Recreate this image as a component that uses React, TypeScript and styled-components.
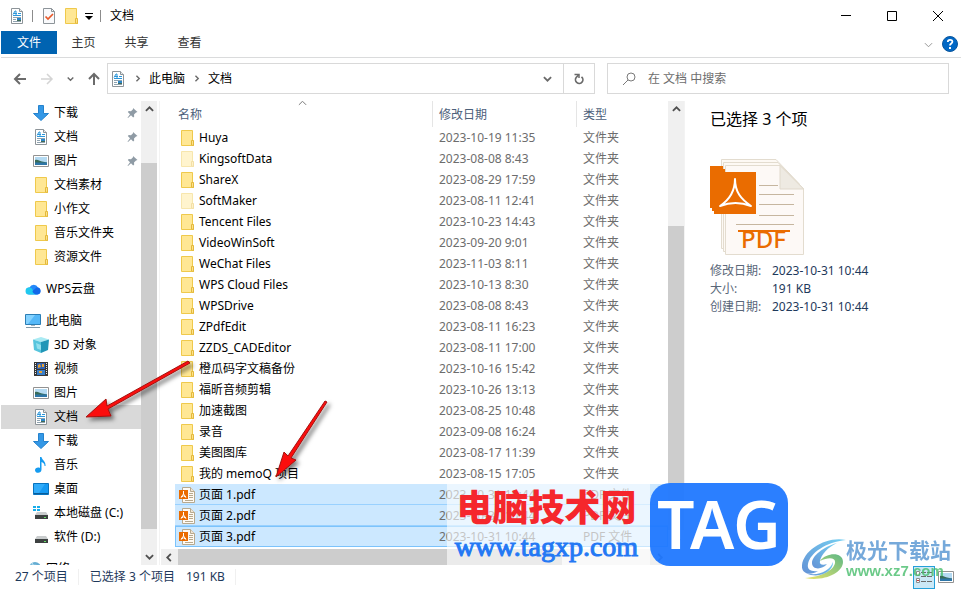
import React from "react";
import styled, { createGlobalStyle } from "styled-components";

const GlobalStyle = createGlobalStyle`
  *, *::before, *::after { box-sizing: border-box; }
  body {
    margin: 0;
    background: #fff;
    color: #000;
    font: 12px/16px "Noto Sans", "Noto Sans CJK SC", sans-serif;
  }
  button, input {
    font: inherit;
    color: inherit;
    margin: 0;
    padding: 0;
    border: 0;
    background: none;
  }
  a { color: inherit; text-decoration: none; }
  svg { display: block; flex: none; }
`;

/* ---------- layout ---------- */

const Window = styled.div`
  position: relative;
  display: flex;
  flex-direction: column;
  height: 100vh;
  padding: 0 1px;
  overflow: hidden;
  background: #fff;
`;

const TitleBar = styled.header`
  display: flex;
  align-items: center;
  height: 31px;
  flex: none;
`;

const QuickAccess = styled.div`
  display: flex;
  align-items: center;
  gap: 6px;
  padding-left: 8px;
`;

const QuickButton = styled.button<{ $narrow?: boolean }>`
  display: grid;
  place-items: center;
  width: ${(p) => (p.$narrow ? 8 : 16)}px;
  height: 20px;
`;

const Separator = styled.span`
  width: 1px;
  height: 12px;
  margin: 0 2px 0 1px;
  background: #8c8c8c;
`;

const WindowTitle = styled.h1`
  margin: 0 0 0 7px;
  font-size: 12px;
  font-weight: 400;
`;

const WindowButtons = styled.div`
  display: flex;
  margin-left: auto;
`;

const WindowButton = styled.button`
  display: grid;
  place-items: center;
  width: 46px;
  height: 31px;
`;

const Ribbon = styled.nav`
  display: flex;
  align-items: flex-start;
  flex: none;
  height: 27px;
  border-bottom: 1px solid #dadbdc;
`;

const RibbonTab = styled.button<{ $primary?: boolean }>`
  width: ${(p) => (p.$primary ? 56 : 53)}px;
  height: 23px;
  line-height: 24px;
  text-align: center;
  color: ${(p) => (p.$primary ? "#fff" : "#333")};
  background: ${(p) => (p.$primary ? "#0063b1" : "transparent")};
`;

const RibbonTools = styled.div`
  display: flex;
  align-items: center;
  gap: 9px;
  height: 26px;
  margin-left: auto;
  padding-right: 3px;
`;

const AddressRow = styled.div`
  display: flex;
  align-items: center;
  flex: none;
  height: 43px;
  padding: 0 12px 2px 12px;
`;

const HistoryButtons = styled.div`
  display: flex;
  align-items: center;
  justify-content: space-between;
  width: 88px;
  margin-right: 6px;
`;

const PlainButton = styled.button`
  display: grid;
  place-items: center;
`;

const AddressBox = styled.div`
  display: flex;
  align-items: center;
  flex: 1;
  height: 31px;
  border: 1px solid #d9d9d9;
`;

const Crumbs = styled.div`
  display: flex;
  align-items: center;
  flex: 1;
  gap: 8px;
  padding-left: 2px;
`;

const AddressButton = styled.button<{ $divided?: boolean }>`
  display: grid;
  place-items: center;
  width: 31px;
  height: 29px;
  border-left: ${(p) => (p.$divided ? "1px solid #d9d9d9" : "0")};
`;

const SearchBox = styled.label`
  display: flex;
  align-items: center;
  gap: 12px;
  width: 342px;
  height: 31px;
  margin-left: 12px;
  padding: 0 14px;
  border: 1px solid #d9d9d9;
`;

const SearchInput = styled.input`
  flex: 1;
  min-width: 0;
  outline: 0;
  &::placeholder { color: #6d6d6d; opacity: 1; }
`;

const Main = styled.main`
  display: grid;
  grid-template-columns: 159px minmax(0, 1fr) 276px;
  flex: 1;
  min-height: 0;
`;

/* ---------- navigation pane ---------- */

const NavPane = styled.aside`
  display: flex;
  min-height: 0;
  padding-right: 2px;
  border-right: 1px solid #f3f3f3;
`;

const NavList = styled.div`
  flex: 1;
  min-width: 0;
  overflow: hidden;
`;

const NavGroup = styled.div`
  margin-bottom: 8px;
`;

const NavItem = styled.a<{ $root?: boolean; $active?: boolean }>`
  display: flex;
  align-items: center;
  gap: 5px;
  height: 24px;
  padding: 0 3px 0 ${(p) => (p.$root ? 24 : 32)}px;
  white-space: nowrap;
  background: ${(p) => (p.$active ? "#d9d9d9" : "transparent")};
`;

const NavLabel = styled.span`
  flex: 1;
`;

/* ---------- scroll bars ---------- */

const Scroller = styled.div<{ $horizontal?: boolean }>`
  display: flex;
  flex: none;
  flex-direction: ${(p) => (p.$horizontal ? "row" : "column")};
  ${(p) => (p.$horizontal ? "height: 16px; margin-right: 16px;" : "width: 16px;")}
  background: #f0f0f0;
`;

const ScrollArrow = styled.button`
  display: grid;
  place-items: center;
  flex: none;
  width: 16px;
  height: 17px;
`;

const ScrollGap = styled.span<{ $grow: number }>`
  flex: ${(p) => p.$grow} 1 0;
`;

const ScrollThumb = styled.span<{ $grow: number }>`
  flex: ${(p) => p.$grow} 1 0;
  background: #cdcdcd;
`;

/* ---------- file list ---------- */

const ListPane = styled.section`
  display: flex;
  flex-direction: column;
  min-height: 0;
  padding: 0 0 0 1px;
  border-right: 1px solid #f3f3f3;
`;

const ListBody = styled.div`
  display: flex;
  flex: 1;
  min-height: 0;
`;

const TableWrap = styled.div`
  flex: 1;
  min-width: 0;
  padding-left: 14px;
  overflow: hidden;
`;

const FileTable = styled.table`
  width: 100%;
  table-layout: fixed;
  border-collapse: separate;
  border-spacing: 0;
`;

const HeadCell = styled.th<{ $width?: number; $first?: boolean }>`
  position: relative;
  width: ${(p) => (p.$width ? `${p.$width}px` : "auto")};
  height: 26px;
  padding: 1px 0 0 ${(p) => (p.$first ? 3 : 6)}px;
  border-right: ${(p) => (p.$width ? "1px solid #e5e5e5" : "0")};
  font-weight: 400;
  text-align: left;
  color: #4c607a;
`;

const SortMark = styled.span`
  position: absolute;
  top: -2px;
  left: 50%;
  margin-left: -6px;
`;

const FileRow = styled.tr<{ $selected?: boolean; $focused?: boolean }>`
  color: #6d6d6d;
  background: ${(p) => (p.$selected ? "#cce8ff" : "transparent")};
  td { box-shadow: ${(p) => (p.$selected ? "inset 0 -1px #99d1ff" : "none")}; }
  outline: ${(p) => (p.$focused ? "1px solid #7cc3fb" : "0")};
  outline-offset: -1px;
`;

const Cell = styled.td`
  height: 21px;
  padding: 0 0 0 6px;
  white-space: nowrap;
`;

const NameCell = styled(Cell)`
  padding-left: 4px;
  color: #000;
`;

const FileName = styled.div`
  display: flex;
  align-items: center;
  gap: 4px;
`;

/* ---------- preview and status ---------- */

const Preview = styled.aside`
  padding: 7px 12px 0 25px;
`;

const PreviewTitle = styled.h2`
  margin: 0 0 29px;
  font-size: 16px;
  line-height: 22px;
  font-weight: 400;
`;

const Details = styled.dl`
  display: grid;
  grid-template-columns: 62px 1fr;
  margin: 7px 0 0;
  line-height: 18px;
  dt { color: #5a6779; white-space: nowrap; }
  dd { margin: 0; color: #1e395b; }
`;

const StatusBar = styled.footer`
  display: flex;
  align-items: center;
  flex: none;
  height: 24px;
  padding: 0 7px 0 14px;
  color: #1e395b;
`;

const StatusText = styled.span<{ $divided?: boolean }>`
  margin-right: 11px;
  padding-right: ${(p) => (p.$divided ? 10 : 0)}px;
  border-right: ${(p) => (p.$divided ? "1px solid #f0f0f0" : "0")};
`;

const ViewButtons = styled.div`
  display: flex;
  align-items: center;
  gap: 3px;
  margin-left: auto;
`;

const ViewButton = styled.button<{ $active?: boolean }>`
  display: grid;
  place-items: center;
  width: ${(p) => (p.$active ? 22 : 16)}px;
  height: 23px;
  border: ${(p) => (p.$active ? "1px solid #26a0da" : "0")};
  background: ${(p) => (p.$active ? "#cbe8f6" : "transparent")};
`;

/* ---------- overlays ---------- */

const ArrowLayer = styled.svg`
  position: absolute;
  top: 0;
  left: 0;
  pointer-events: none;
`;

const TagMark = styled.div`
  position: absolute;
  left: 447px;
  bottom: 23px;
  display: flex;
  align-items: center;
  pointer-events: none;
`;

const TagCaption = styled.div`
  display: flex;
  flex-direction: column;
  align-items: center;
  width: 203px;
  height: 81px;
  padding-right: 4px;
  background: rgba(255, 255, 255, 0.6);
`;

const TagName = styled.strong`
  font: 900 36px/42px "Noto Sans CJK SC", sans-serif;
  color: #f5272c;
`;

const TagUrl = styled.span`
  font: 28px/42px "Liberation Serif", serif;
  color: #2478f4;
  -webkit-text-stroke: 1px #2478f4;
`;

const TagBadge = styled.div`
  width: 138px;
  height: 83px;
  border-radius: 20px;
  background: rgba(32, 120, 255, 0.95);
  color: #fff;
  font: 600 66px/80px "Noto Sans", sans-serif;
  text-align: center;
`;

const SiteMark = styled.div`
  position: absolute;
  right: 11px;
  bottom: 7px;
  display: flex;
  align-items: center;
  pointer-events: none;
  opacity: 0.8;
`;

const SiteText = styled.div`
  display: flex;
  flex-direction: column;
`;

const SiteName = styled.strong`
  font: 700 21px/22px "Noto Sans CJK SC", sans-serif;
  color: #5494d2;
`;

const SiteUrl = styled.span`
  font: 700 15px/22px "Liberation Sans", sans-serif;
  color: #48bd6c;
`;

/* ---------- icons ---------- */

const FolderIcon = ({ faded }: { faded?: boolean }) => (
  <svg width="16" height="16" viewBox="0 0 16 16" opacity={faded ? 0.45 : 1} aria-hidden>
    <path d="M2.5.5h11v10.5h1v4.5h-12z" fill="#ffe794" stroke="#efc94c" />
    <path d="M12.5 15V10.5h2V15.500z" fill="#ffe28a" stroke="#e3b93c" />
  </svg>
);

const DocIcon = () => (
  <svg width="16" height="16" viewBox="0 0 16 16" aria-hidden>
    <path d="M2.500.5h8l3 3v12h-11z" fill="#fff" stroke="#8d9499" />
    <path d="M10.500.5v3h3" fill="#e9ebec" stroke="#8d9499" />
    <path d="M4 6.500l2-3.500h1v4M5 5.500h3M9 5.500h3M4 7.500h8" fill="none" stroke="#2b96da" />
    <path d="M4 9.500h8M4 11.500h3M4 13.500h8" stroke="#8fa3b0" />
    <path d="M8 10h4v3H8z" fill="#2b86c8" />
    <path d="M8 12h4v1H8z" fill="#426a55" />
  </svg>
);

const PictureIcon = () => (
  <svg width="16" height="16" viewBox="0 0 16 16" aria-hidden>
    <path d="M.5 2.500h15v11H.5z" fill="#fff" stroke="#929292" />
    <path d="M2 4h12v8H2z" fill="#b4daf2" />
    <path d="M2 7c3-1 4 1 7 1.500l5 1V10H2z" fill="#386b59" />
    <path d="M2 9.500h12V12H2z" fill="#2e76a8" />
  </svg>
);

const DownloadIcon = () => (
  <svg width="16" height="16" viewBox="0 0 16 16" aria-hidden>
    <path d="M5.500.5h5v8h5L8 15.500.5 8.500h5z" fill="#3498e6" stroke="#2582cd" />
  </svg>
);

const PinIcon = () => (
  <svg width="11" height="12" viewBox="0 0 11 12" aria-hidden>
    <path d="M6 1l4.500 4-1.500.4-2 2 .2 2.200-1 1L4 8.200 1 11 .5 10.700 3 7.300.8 5l1-1L4 4.200l2-2z" fill="#8f9ba5" />
  </svg>
);

const CloudIcon = () => (
  <svg width="16" height="16" viewBox="0 0 16 16" aria-hidden>
    <path d="M4.500 13.500a3.500 3.500 0 010-7 4.700 4.700 0 018.500 0 3.600 3.600 0 01-1 7z" fill="#2388fa" />
    <path d="M3.800 13.500a3.400 3.400 0 01.5-7c4 0 3 4.500 7 7z" fill="#20c9ef" />
    <path d="M11.500 6.500a3.500 3.500 0 011 7c-3.500 0-5-2-5-3.500z" fill="#1268e8" />
  </svg>
);

const ComputerIcon = () => (
  <svg width="16" height="16" viewBox="0 0 16 16" aria-hidden>
    <path d="M.5 1.500h15v10H.5z" fill="#55b8f8" stroke="#2c7eb5" />
    <path d="M1 2h9L3 11H1z" fill="#84d2ff" />
    <path d="M6 12h4v1H6z" fill="#a3b4bf" />
    <path d="M1 14.500h14" stroke="#8299a8" />
  </svg>
);

const CubeIcon = () => (
  <svg width="16" height="16" viewBox="0 0 16 16" aria-hidden>
    <path d="M8 0l8 2.500L8 5 0 2.500z" fill="#a9eaf3" />
    <path d="M0 2.500L8 5v11l-7-3z" fill="#56c5dd" />
    <path d="M16 2.500L8 5v11l7-3z" fill="#2196b7" />
    <path d="M3 6l5 2v5l-4-1.500z" fill="#91e0ee" />
  </svg>
);

const VideoIcon = () => (
  <svg width="16" height="16" viewBox="0 0 16 16" aria-hidden>
    <path d="M1 1h14v14H1z" fill="#383838" />
    <path d="M4 2h8v6H4z" fill="#2f62b6" />
    <path d="M4 9h8v5H4z" fill="#397fcb" />
    <path d="M5 4l2-1 1 3-3 1zM9 3h2v3H9zM6 10h3v2H6z" fill="#e8a334" />
    <path d="M2.500 2v12M13.500 2v12" stroke="#eee" strokeDasharray="1 1" />
  </svg>
);

const MusicIcon = () => (
  <svg width="16" height="16" viewBox="0 0 16 16" aria-hidden>
    <path d="M7 0h1.500c.3 3 4.500 4 4 9h-1c.2-2.500-1.500-3.500-3-4v7.500C8.500 17 2 16.500 2 13.200 2 10.800 5 10 7 11z" fill="#159bf0" />
  </svg>
);

const DesktopIcon = () => (
  <svg width="16" height="16" viewBox="0 0 16 16" aria-hidden>
    <path d="M.5 2.500h15v11H.5z" fill="#169af3" stroke="#0873be" />
    <path d="M1 3h11L6 12H1z" fill="#31acfa" />
    <path d="M1 12.500h14" stroke="#085c99" />
  </svg>
);

const DriveIcon = ({ system }: { system?: boolean }) => (
  <svg width="16" height="16" viewBox="0 0 16 16" aria-hidden>
    {system && <path d="M0 1h3v2H0zM4 1h3v2H4zM0 4h3v2H0zM4 4h3v2H4z" fill="#18adea" />}
    <path d="M4 7h9l2 3H2z" fill="#c9cccd" />
    <path d="M2 10h13v4H2z" fill="#3d4141" />
    <path d="M11 12h2v1h-2z" fill="#66df65" />
  </svg>
);

const NetworkIcon = () => (
  <svg width="16" height="16" viewBox="0 0 16 16" aria-hidden>
    <circle cx="10" cy="7" r="6" fill="#65add2" />
    <path d="M5 4c3 1 7-1 9 2M7 2l5 8" stroke="#c5e8f7" fill="none" />
    <path d="M1 7h8v6H1z" fill="#378cc4" />
  </svg>
);

const PdfIcon = () => (
  <svg width="16" height="16" viewBox="0 0 16 16" aria-hidden>
    <path d="M3.500.5h8l4 4v11h-12z" fill="#fffaf3" stroke="#b7a98e" />
    <path d="M11.500.5v4h4" fill="#eee4d5" stroke="#b7a98e" />
    <path d="M10 6.500h4M10 8.500h4M10 10.500h4M6 13.500h8" stroke="#b7a98e" />
    <path d="M0 3h9v9H0z" fill="#ea6c00" />
    <path d="M4.500 4v3L2 10.300M4.500 7L7 10.300M2 10.300l2.500-1.500L7 10.300" fill="none" stroke="#fff" />
  </svg>
);

const CheckDocIcon = () => (
  <svg width="14" height="16" viewBox="0 0 14 16" aria-hidden>
    <path d="M1.500.5h8l3 3v12h-11z" fill="#f9fafc" stroke="#8d9499" />
    <path d="M9.500.5v3h3" fill="none" stroke="#8d9499" />
    <path d="M3.500 8.500l2.500 2.500 5-5" fill="none" stroke="#e8592a" strokeWidth="1.700" />
  </svg>
);

const Chevron = ({
  dir,
  color = "#6a6a6a",
  weight = 1,
  size = 9,
}: {
  dir: "up" | "down" | "left" | "right";
  color?: string;
  weight?: number;
  size?: number;
}) => {
  const d = { up: "M1 6.500l4-4 4 4", down: "M1 3.500l4 4 4-4", left: "M6.500 1l-4 4 4 4", right: "M3.500 1l4 4-4 4" }[dir];
  return (
    <svg width={size} height={size} viewBox="0 0 10 10" aria-hidden>
      <path d={d} fill="none" stroke={color} strokeWidth={weight} />
    </svg>
  );
};

const HistoryArrow = ({ dir, color = "#6b6b6b" }: { dir: "back" | "forward" | "up"; color?: string }) => {
  const d = {
    back: "M13 7H2M7 2L2 7l5 5",
    forward: "M1 7h11M7 2l5 5-5 5",
    up: "M7 13V2M2 7l5-5 5 5",
  }[dir];
  return (
    <svg width="14" height="14" viewBox="0 0 14 14" aria-hidden>
      <path d={d} fill="none" stroke={color} strokeWidth={dir === "forward" ? 1.500 : 2} />
    </svg>
  );
};

const PdfStack = () => (
  <svg width="94" height="96" viewBox="0 0 94 96" role="img" aria-label="PDF">
    <path d="M11.500.5H66l23 24v65H11.500z" fill="#fdf9f4" stroke="#e3dccf" />
    <path d="M13.500 3.500H68l23 24v65H13.500z" fill="#fdf9f4" stroke="#e3dccf" />
    <path d="M15.500 6.500H70l23.500 23v66h-78z" fill="#fdf9f6" stroke="#e3dccf" />
    <path d="M70 6.500V30h23.500z" fill="#eeeae2" stroke="#e0d9cc" />
    <path d="M0 7h13v3h2v3h20v35H4v-3H2v-3H0z" fill="#ea6c00" />
    <path d="M4 13h42v42H4zM0 7h2v42H0zM2 10h2v42H2z" fill="#ea6c00" />
    <path d="M49 26.500h19M49 35.500h35M49 45.500h35M49 56.500h35M26 65.500h58" stroke="#c6b69f" />
    <path d="M25 20c0 13-6 21-15 27 10-4 21-4 31 0C31 40 25 33 25 20z" fill="none" stroke="#fff" strokeWidth="2" strokeLinejoin="round" />
    <path d="M28 72h52" stroke="#ea6c00" strokeWidth="2" />
    <text x="31" y="89" fill="#ea6c00" fontFamily="Noto Sans, sans-serif" fontWeight="500" fontSize="24">PDF</text>
  </svg>
);

const SwirlLogo = () => (
  <svg width="44" height="42" viewBox="0 0 44 42" aria-hidden>
    <defs>
      <linearGradient id="swirlBlue" x1="0" y1="1" x2="1" y2="0">
        <stop offset="0" stopColor="#3e78cc" />
        <stop offset="1" stopColor="#53c4ee" />
      </linearGradient>
      <linearGradient id="swirlGreen" x1="0" y1="1" x2="1" y2="0">
        <stop offset="0" stopColor="#e7dd48" />
        <stop offset="1" stopColor="#36a767" />
      </linearGradient>
    </defs>
    <path d="M44 1C24-3 2 11 0 26c-1 9 8 11 16 6-8 1-11-2-10-7C8 14 24 3 44 1z" fill="url(#swirlBlue)" />
    <path d="M35 4C21 8 10 17 10 24c0 7 10 7 15 1-5 2-8 0-7-3 1-6 8-14 17-18z" fill="url(#swirlBlue)" />
    <path d="M18 22c7-9 23-9 23 1C41 34 21 43 3 39c16-1 29-8 30-15 1-6-7-6-15-2z" fill="url(#swirlGreen)" />
    <path d="M4 34c11 4 24-2 27-11 1 9-14 18-27 11z" fill="url(#swirlBlue)" />
  </svg>
);

/* ---------- data ---------- */

type NavEntry = { label: string; icon: React.ReactNode; root?: boolean; pinned?: boolean; active?: boolean };

const navGroups: NavEntry[][] = [
  [
    { label: "下载", icon: <DownloadIcon />, pinned: true },
    { label: "文档", icon: <DocIcon />, pinned: true },
    { label: "图片", icon: <PictureIcon />, pinned: true },
    { label: "文档素材", icon: <FolderIcon /> },
    { label: "小作文", icon: <FolderIcon /> },
    { label: "音乐文件夹", icon: <FolderIcon /> },
    { label: "资源文件", icon: <FolderIcon /> },
  ],
  [{ label: "WPS云盘", icon: <CloudIcon />, root: true }],
  [
    { label: "此电脑", icon: <ComputerIcon />, root: true },
    { label: "3D 对象", icon: <CubeIcon /> },
    { label: "视频", icon: <VideoIcon /> },
    { label: "图片", icon: <PictureIcon /> },
    { label: "文档", icon: <DocIcon />, active: true },
    { label: "下载", icon: <DownloadIcon /> },
    { label: "音乐", icon: <MusicIcon /> },
    { label: "桌面", icon: <DesktopIcon /> },
    { label: "本地磁盘 (C:)", icon: <DriveIcon system /> },
    { label: "软件 (D:)", icon: <DriveIcon /> },
  ],
  [{ label: "网络", icon: <NetworkIcon />, root: true }],
];

type FileEntry = { name: string; date: string; faded?: boolean; pdf?: boolean };

const files: FileEntry[] = [
  { name: "Huya", date: "2023-10-19 11:35" },
  { name: "KingsoftData", date: "2023-08-08 8:43", faded: true },
  { name: "ShareX", date: "2023-08-29 17:59" },
  { name: "SoftMaker", date: "2023-08-11 12:41", faded: true },
  { name: "Tencent Files", date: "2023-10-23 14:43" },
  { name: "VideoWinSoft", date: "2023-09-20 9:01" },
  { name: "WeChat Files", date: "2023-11-03 8:11" },
  { name: "WPS Cloud Files", date: "2023-10-13 8:30" },
  { name: "WPSDrive", date: "2023-08-08 8:43" },
  { name: "ZPdfEdit", date: "2023-08-11 16:23" },
  { name: "ZZDS_CADEditor", date: "2023-08-11 17:00" },
  { name: "橙瓜码字文稿备份", date: "2023-10-16 15:42" },
  { name: "福昕音频剪辑", date: "2023-10-26 13:13" },
  { name: "加速截图", date: "2023-08-25 10:48" },
  { name: "录音", date: "2023-09-08 16:24" },
  { name: "美图图库", date: "2023-08-17 11:39" },
  { name: "我的 memoQ 项目", date: "2023-08-15 17:05" },
  { name: "页面 1.pdf", date: "2023-10-31 10:44", pdf: true },
  { name: "页面 2.pdf", date: "2023-10-31 10:44", pdf: true },
  { name: "页面 3.pdf", date: "2023-10-31 10:44", pdf: true },
];

const ScrollBar = ({ parts, horizontal }: { parts: [number, number, number]; horizontal?: boolean }) => (
  <Scroller $horizontal={horizontal}>
    <ScrollArrow aria-label={horizontal ? "向左滚动" : "向上滚动"}>
      <Chevron dir={horizontal ? "left" : "up"} color="#505050" weight={2} />
    </ScrollArrow>
    <ScrollGap $grow={parts[0]} />
    <ScrollThumb $grow={parts[1]} />
    <ScrollGap $grow={parts[2]} />
    <ScrollArrow aria-label={horizontal ? "向右滚动" : "向下滚动"}>
      <Chevron dir={horizontal ? "right" : "down"} color="#505050" weight={2} />
    </ScrollArrow>
  </Scroller>
);

export default function App() {
  return (
    <Window>
      <GlobalStyle />
      <TitleBar>
        <QuickAccess>
          <DocIcon />
          <Separator />
          <QuickButton aria-label="属性"><CheckDocIcon /></QuickButton>
          <QuickButton aria-label="新建文件夹"><FolderIcon /></QuickButton>
          <QuickButton $narrow aria-label="自定义快速访问工具栏">
            <svg width="8" height="8" viewBox="0 0 8 8" aria-hidden>
              <path d="M0 1.500h8" stroke="#000" />
              <path d="M0 4h8L4 8z" />
            </svg>
          </QuickButton>
          <Separator />
        </QuickAccess>
        <WindowTitle>文档</WindowTitle>
        <WindowButtons>
          <WindowButton aria-label="最小化">
            <svg width="10" height="10" viewBox="0 0 10 10"><path d="M0 4.500h10" stroke="#000" /></svg>
          </WindowButton>
          <WindowButton aria-label="最大化">
            <svg width="10" height="10" viewBox="0 0 10 10"><path d="M.5.5h9v9h-9z" fill="none" stroke="#000" /></svg>
          </WindowButton>
          <WindowButton aria-label="关闭">
            <svg width="10" height="10" viewBox="0 0 10 10"><path d="M0 0l10 10M10 0L0 10" stroke="#000" /></svg>
          </WindowButton>
        </WindowButtons>
      </TitleBar>

      <Ribbon>
        <RibbonTab $primary>文件</RibbonTab>
        <RibbonTab>主页</RibbonTab>
        <RibbonTab>共享</RibbonTab>
        <RibbonTab>查看</RibbonTab>
        <RibbonTools>
          <PlainButton aria-label="展开功能区"><Chevron dir="down" color="#8c8c8c" /></PlainButton>
          <PlainButton aria-label="帮助">
            <svg width="16" height="16" viewBox="0 0 16 16" aria-hidden>
              <circle cx="8" cy="8" r="7.500" fill="#0067c5" stroke="#0b569c" />
              <path d="M5.800 6c0-3 4.600-2.800 4.600-.3C10.400 7.500 8 7.500 8 9.500" fill="none" stroke="#fff" strokeWidth="1.800" />
              <path d="M7 11h2v2H7z" fill="#fff" />
            </svg>
          </PlainButton>
        </RibbonTools>
      </Ribbon>

      <AddressRow>
        <HistoryButtons>
          <PlainButton aria-label="后退"><HistoryArrow dir="back" /></PlainButton>
          <PlainButton aria-label="前进"><HistoryArrow dir="forward" color="#d4d4d4" /></PlainButton>
          <PlainButton aria-label="最近浏览的位置"><Chevron dir="down" weight={2} size={7} /></PlainButton>
          <PlainButton aria-label="上移"><HistoryArrow dir="up" /></PlainButton>
        </HistoryButtons>
        <AddressBox>
          <Crumbs>
            <DocIcon />
            <Chevron dir="right" weight={2} size={7} />
            <a href="#computer">此电脑</a>
            <Chevron dir="right" weight={2} size={7} />
            <a href="#documents">文档</a>
          </Crumbs>
          <AddressButton aria-label="以前的位置"><Chevron dir="down" weight={2} /></AddressButton>
          <AddressButton $divided aria-label="刷新">
            <svg width="12" height="12" viewBox="0 0 12 12" aria-hidden>
              <path d="M8.500 3.800A3.700 3.700 0 113.200 4.500L5.500 2" fill="none" stroke="#6a6a6a" strokeWidth="1.700" />
              <path d="M1.500 1.500h4.500V5" fill="none" stroke="#6a6a6a" strokeWidth="1.500" />
            </svg>
          </AddressButton>
        </AddressBox>
        <SearchBox>
          <svg width="14" height="14" viewBox="0 0 14 14" aria-hidden>
            <circle cx="9" cy="5" r="4" fill="none" stroke="#7a7a7a" />
            <path d="M6 8l-5 5" stroke="#7a7a7a" />
          </svg>
          <SearchInput type="text" aria-label="搜索" placeholder="在 文档 中搜索" />
        </SearchBox>
      </AddressRow>

      <Main>
        <NavPane>
          <NavList>
            {navGroups.map((group, g) => (
              <NavGroup key={g}>
                {group.map((item) => (
                  <NavItem key={item.label} href="#folder" $root={item.root} $active={item.active}>
                    {item.icon}
                    <NavLabel>{item.label}</NavLabel>
                    {item.pinned && <PinIcon />}
                  </NavItem>
                ))}
              </NavGroup>
            ))}
          </NavList>
          <ScrollBar parts={[45, 366, 19]} />
        </NavPane>

        <ListPane>
          <ListBody>
            <TableWrap>
              <FileTable>
                <thead>
                  <tr>
                    <HeadCell $width={258} $first>
                      名称
                      <SortMark><Chevron dir="up" /></SortMark>
                    </HeadCell>
                    <HeadCell $width={144}>修改日期</HeadCell>
                    <HeadCell>类型</HeadCell>
                  </tr>
                </thead>
                <tbody>
                  {files.map((file, i) => (
                    <FileRow key={file.name} $selected={file.pdf} $focused={i === files.length - 1}>
                      <NameCell>
                        <FileName>
                          {file.pdf ? <PdfIcon /> : <FolderIcon faded={file.faded} />}
                          {file.name}
                        </FileName>
                      </NameCell>
                      <Cell>{file.date}</Cell>
                      <Cell>{file.pdf ? "PDF 文件" : "文件夹"}</Cell>
                    </FileRow>
                  ))}
                </tbody>
              </FileTable>
            </TableWrap>
            <ScrollBar parts={[108, 304, 2]} />
          </ListBody>
          <ScrollBar horizontal parts={[1, 382, 90]} />
        </ListPane>

        <Preview>
          <PreviewTitle>已选择 3 个项</PreviewTitle>
          <PdfStack />
          <Details>
            <dt>修改日期:</dt>
            <dd>2023-10-31 10:44</dd>
            <dt>大小:</dt>
            <dd>191 KB</dd>
            <dt>创建日期:</dt>
            <dd>2023-10-31 10:44</dd>
          </Details>
        </Preview>
      </Main>

      <StatusBar>
        <StatusText $divided>27 个项目</StatusText>
        <StatusText>已选择 3 个项目</StatusText>
        <StatusText $divided>191 KB</StatusText>
        <ViewButtons>
          <ViewButton $active aria-label="详细信息">
            <svg width="18" height="14" viewBox="0 0 18 14" aria-hidden>
              <path d="M1.500 1.500h3v4h-3zM1.500 8.500h3v4h-3z" fill="#fff" stroke="#8d8d8d" />
              <path d="M6 2.500h5M12 2.500h5M6 6.500h5M12 6.500h5M6 11.500h5M12 11.500h5" stroke="#6b6b6b" />
              <path d="M2 10h2v1H2z" fill="#c23b3b" />
            </svg>
          </ViewButton>
          <ViewButton aria-label="大图标"><PictureIcon /></ViewButton>
        </ViewButtons>
      </StatusBar>

      <ArrowLayer width="340" height="490" viewBox="0 0 340 490" aria-hidden>
        <defs>
          <filter id="arrowShadow" x="-20%" y="-20%" width="150%" height="150%">
            <feDropShadow dx="3" dy="3" stdDeviation="2" floodColor="#000" floodOpacity="0.5" />
          </filter>
        </defs>
        <g filter="url(#arrowShadow)" fill="#fb0d08" stroke="#a31311">
          <path d="M188 361l2 2-82 46 3 7-25 1 20-18 1 7z" />
          <path d="M325 401l2 1-36 56 5 2-20 17 8-25 4 4z" />
        </g>
      </ArrowLayer>

      <TagMark>
        <TagCaption>
          <TagName>电脑技术网</TagName>
          <TagUrl>www.tagxp.com</TagUrl>
        </TagCaption>
        <TagBadge>TAG</TagBadge>
      </TagMark>

      <SiteMark>
        <SwirlLogo />
        <SiteText>
          <SiteName>极光下载站</SiteName>
          <SiteUrl>www.xz7.com</SiteUrl>
        </SiteText>
      </SiteMark>
    </Window>
  );
}
